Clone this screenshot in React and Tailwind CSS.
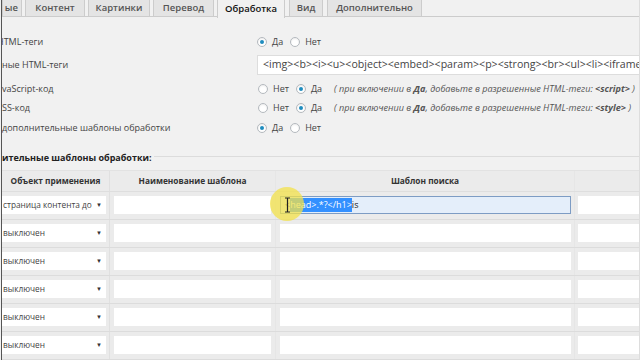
import React from "react";

function Radio({ checked }) {
  return (
    <span className="w-[10px] h-[10px] rounded-full border border-[#b4b9be] bg-white flex items-center justify-center shadow-[inset_0_1px_2px_rgba(0,0,0,0.08)]">
      {checked && <span className="w-[4px] h-[4px] rounded-full bg-[#1e8cbe]" />}
    </span>
  );
}

function YesNo({ first, second, checkedFirst }) {
  return (
    <div className="flex items-center">
      <Radio checked={checkedFirst} />
      <span className="ml-[5px]">{first}</span>
      <span className="ml-[7px]"><Radio checked={!checkedFirst} /></span>
      <span className="ml-[5px]">{second}</span>
    </div>
  );
}

function Tab({ w, children, active }) {
  return (
    <div
      className={
        active
          ? "h-[18px] mb-[-1px] bg-[#f1f1f1] border-x border-[#ccc] flex items-center justify-center text-[#111] font-semibold shrink-0 " + w
          : "h-[17px] bg-[#e4e4e4] border border-t-0 border-[#ccc] flex items-center justify-center text-[#555] font-semibold shrink-0 " + w
      }
    >
      {children}
    </div>
  );
}

function SelectBox({ text }) {
  return (
    <div className="w-[104px] h-[18px] bg-white flex items-center justify-between pl-[1px] pr-[4px] text-[8.3px] text-[#444]">
      <span className="whitespace-nowrap overflow-hidden">{text}</span>
      <span className="text-[6px] text-[#333]">▼</span>
    </div>
  );
}

function Row({ selectText, focused }) {
  return (
    <div className="flex h-[28px] border-b border-[#dcdcdc] shrink-0">
      <div className="w-[108px] pt-[4px] border-r border-[#e0e0e0] shrink-0">
        <SelectBox text={selectText} />
      </div>
      <div className="w-[166px] pt-[4px] pl-[4px] border-r border-[#e6e6e6] shrink-0">
        <div className="w-[157px] h-[18px] bg-white" />
      </div>
      <div className="w-[299px] pt-[4px] pl-[4px] border-r border-[#e6e6e6] shrink-0">
        {focused ? (
          <div className="w-[291px] h-[18px] bg-[#e4eefa] border border-[#7d9cc4] flex items-center pl-[4px] text-[9px] whitespace-nowrap">
            <span className="text-[#555]">&lt;</span>
            <span className="bg-[#3390ff] text-white">head&gt;.*?&lt;/h1&gt;</span>
            <span className="text-[#222]">is</span>
          </div>
        ) : (
          <div className="w-[291px] h-[18px] bg-white" />
        )}
      </div>
      <div className="flex-1 pt-[4px] pl-[3px]">
        <div className="w-full h-[18px] bg-white" />
      </div>
    </div>
  );
}

export default function App() {
  const rows = [
    { t: "страница контента до", f: true },
    { t: "выключен" },
    { t: "выключен" },
    { t: "выключен" },
    { t: "выключен" },
    { t: "выключен" },
  ];
  return (
    <div className="w-[640px] h-[360px] overflow-hidden bg-[#f1f1f1] relative font-['Open_Sans',sans-serif] text-[#444] text-[9px]">
      <div className="ml-px h-full border-l border-[#555] flex flex-col border-r-[#ddd] border-r">
        {/* tabs */}
        <div className="h-[17px] border-b border-[#ccc] flex items-start gap-[3px] shrink-0 text-[9.5px]">
          <Tab w="w-[20px] justify-end pr-[3px]">ые</Tab>
          <Tab w="w-[60px]">Контент</Tab>
          <Tab w="w-[62px]">Картинки</Tab>
          <Tab w="w-[61px]">Перевод</Tab>
          <Tab w="w-[68px]" active>Обработка</Tab>
          <div className="ml-[1px]"><Tab w="w-[34px]">Вид</Tab></div>
          <div className="ml-[1px]"><Tab w="w-[95px]">Дополнительно</Tab></div>
        </div>

        {/* form rows */}
        <div className="flex items-center h-[20px] mt-[15px] shrink-0">
          <div className="w-[255px] overflow-hidden whitespace-nowrap"><span className="ml-[-5px]">HTML-теги</span></div>
          <YesNo first="Да" second="Нет" checkedFirst />
        </div>
        <div className="flex items-center h-[24px] mt-[1px] shrink-0">
          <div className="w-[255px] whitespace-nowrap">ные HTML-теги</div>
          <div className="flex-1 h-[20px] bg-white border border-[#ddd] border-r-0 flex items-center pl-[5px] whitespace-nowrap overflow-hidden text-[#444] text-[10.6px]">
            &lt;img&gt;&lt;b&gt;&lt;i&gt;&lt;u&gt;&lt;object&gt;&lt;embed&gt;&lt;param&gt;&lt;p&gt;&lt;strong&gt;&lt;br&gt;&lt;ul&gt;&lt;li&gt;&lt;iframe&gt;
          </div>
        </div>
        <div className="flex items-center h-[20px] mt-[2px] shrink-0 whitespace-nowrap">
          <div className="w-[256px]">vaScript-код</div>
          <YesNo first="Нет" second="Да" checkedFirst={false} />
          <span className="ml-[12px] italic text-[9.1px] text-[#555]">
            ( при включении в <b>Да</b>, добавьте в разрешенные HTML-теги: <b>&lt;script&gt;</b> )
          </span>
        </div>
        <div className="flex items-center h-[17px] shrink-0 whitespace-nowrap">
          <div className="w-[256px]">SS-код</div>
          <YesNo first="Нет" second="Да" checkedFirst={false} />
          <span className="ml-[12px] italic text-[9.1px] text-[#555]">
            ( при включении в <b>Да</b>, добавьте в разрешенные HTML-теги: <b>&lt;style&gt;</b> )
          </span>
        </div>
        <div className="flex items-center h-[20px] mt-[2px] shrink-0 whitespace-nowrap">
          <div className="w-[255px]">дополнительные шаблоны обработки</div>
          <YesNo first="Да" second="Нет" checkedFirst />
        </div>

        {/* section heading */}
        <div className="flex items-center h-[16px] mt-[12px] shrink-0">
          <span className="font-bold text-[#222] whitespace-nowrap">ительные шаблоны обработки:</span>
          <div className="flex-1 border-t border-[#dcdcdc] ml-[2px] mt-[-3px]" />
        </div>

        {/* table */}
        <div className="mt-[4px] flex flex-col bg-[#ebebeb] border-t border-[#e2e2e2]">
          <div className="flex h-[21px] shrink-0 font-bold text-[#333] text-[8.3px] border-b border-[#dedede]">
            <div className="w-[108px] flex items-center justify-center border-r border-[#e0e0e0] shrink-0">Объект применения</div>
            <div className="w-[166px] flex items-center justify-center border-r border-[#e6e6e6] shrink-0">Наименование шаблона</div>
            <div className="w-[299px] flex items-center justify-center border-r border-[#e6e6e6] shrink-0">Шаблон поиска</div>
            <div className="flex-1" />
          </div>
          {rows.map((r, i) => (
            <Row key={i} selectText={r.t} focused={r.f} />
          ))}
        </div>
      </div>

      {/* mouse highlight */}
      <div className="absolute left-[270px] top-[187px] w-[34px] h-[34px] rounded-full bg-[#f3e14a]/75" />
      <svg className="absolute left-[284px] top-[197px]" width="7" height="16" viewBox="0 0 7 16">
        <path d="M1 1h5M3.5 1v14M1 15h5" stroke="#222" strokeWidth="1.2" fill="none" />
      </svg>
    </div>
  );
}
